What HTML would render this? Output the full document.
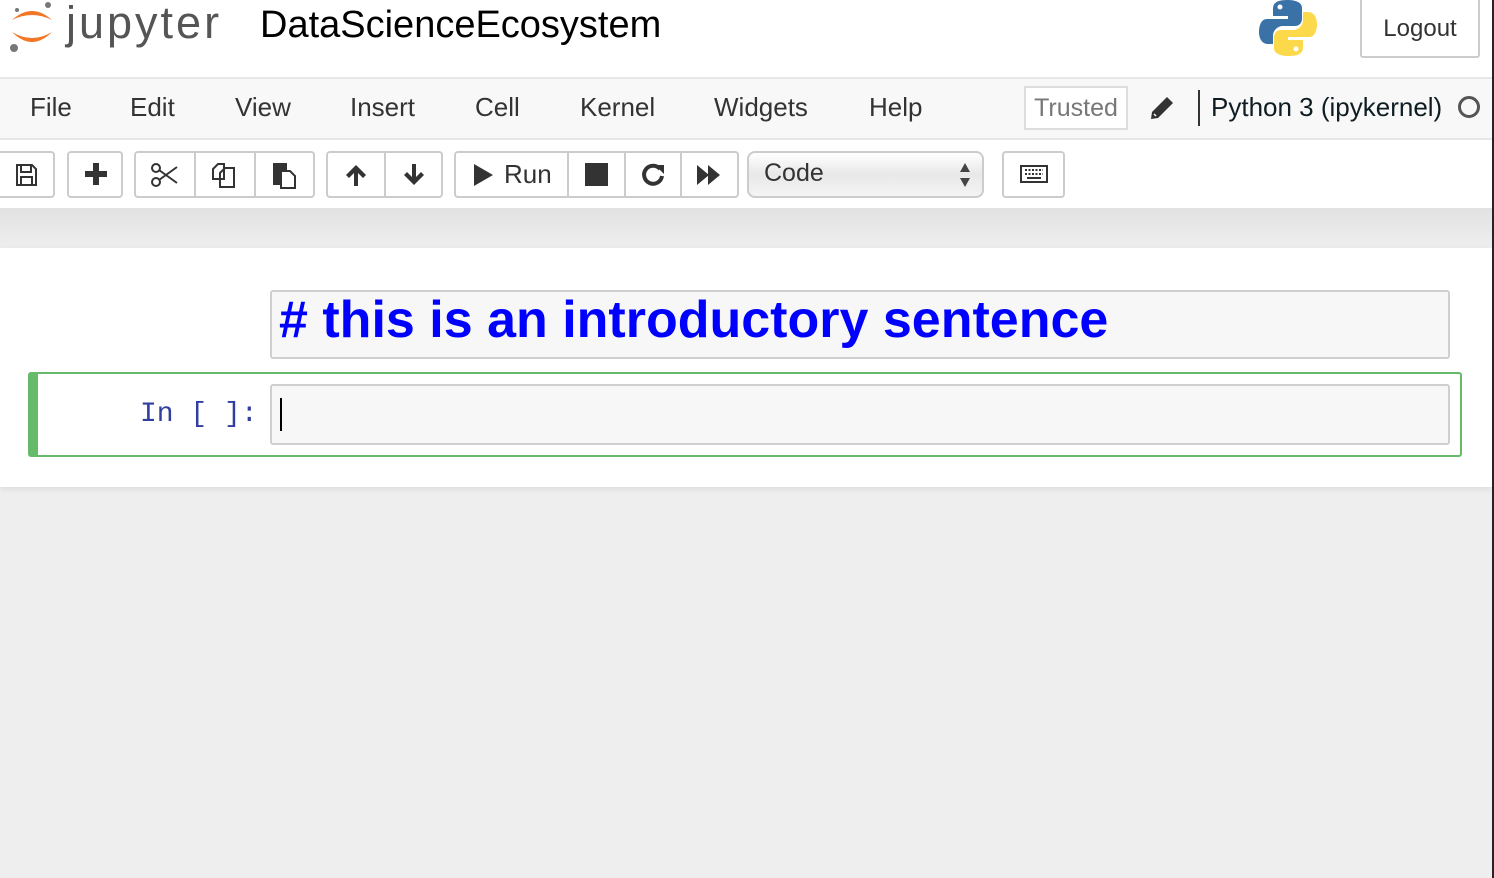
<!DOCTYPE html>
<html><head><style>
*{margin:0;padding:0;box-sizing:border-box}
body{width:1494px;height:878px;background:#eee;font-family:"Liberation Sans",sans-serif;position:relative;overflow:hidden}
.a{position:absolute}
.btn{position:absolute;top:151px;height:47px;border:2px solid #ccc;border-radius:4px;background:#fff}
.sep{position:absolute;top:0;bottom:0;width:2px;background:#ccc}
.menu span{position:absolute;top:92px;font-size:26px;color:#333}
</style></head><body>
<div class="a" style="left:0;top:0;width:1492px;height:77px;background:#fff"></div>
<svg class="a" style="left:8px;top:0" width="48" height="56" viewBox="0 0 48 56">
<path d="M4 20 Q24 2 44 20 Q24 10 4 20Z" fill="#f37726"/>
<path d="M4 32 Q24 52 44 32 Q24 44 4 32Z" fill="#f37726"/>
<circle cx="40" cy="5" r="3" fill="#777"/><circle cx="6" cy="48" r="4" fill="#777"/><circle cx="9" cy="10" r="2" fill="#777"/>
</svg>
<div class="a" style="left:66px;top:-3px;font-size:45px;color:#555;letter-spacing:3px">jupyter</div>
<div class="a" style="left:260px;top:4px;font-size:38px;color:#000">DataScienceEcosystem</div>
<svg class="a" style="left:1259px;top:0" width="58" height="56" viewBox="0 0 58 56">
<path d="M28 0 C14 0 14 6 14 10 V16 H29 V19 H8 C2 19 0 26 0 32 C0 40 4 44 9 44 H14 V36 C14 30 19 26 24 26 H36 C40 26 43 23 43 19 V8 C43 3 38 0 28 0Z" fill="#3a72a8"/>
<path d="M30 56 C44 56 44 50 44 46 V40 H29 V37 H50 C56 37 58 30 58 24 C58 16 54 12 49 12 H44 V20 C44 26 39 30 34 30 H22 C18 30 15 33 15 37 V48 C15 53 20 56 30 56Z" fill="#fcd94a"/>
<circle cx="21" cy="7" r="2.5" fill="#fff"/><circle cx="37" cy="49" r="2.5" fill="#fff"/>
</svg>
<div class="a" style="left:1360px;top:-4px;width:120px;height:62px;border:2px solid #ccc;border-radius:3px;background:#fff;font-size:24px;color:#333;text-align:center;line-height:62px">Logout</div>
<div class="a" style="left:0;top:77px;width:1492px;height:63px;background:#f8f8f8;border-top:2px solid #e7e7e7;border-bottom:2px solid #e7e7e7"></div>
<div class="menu">
<span style="left:30px">File</span><span style="left:130px">Edit</span><span style="left:235px">View</span><span style="left:350px">Insert</span><span style="left:475px">Cell</span><span style="left:580px">Kernel</span><span style="left:714px">Widgets</span><span style="left:869px">Help</span>
</div>
<div class="a" style="left:1024px;top:86px;width:104px;height:44px;border:2px solid #ddd;background:#fff;color:#777;font-size:25px;text-align:center;line-height:40px">Trusted</div>
<svg class="a" style="left:1149px;top:95px" width="26" height="26" viewBox="0 0 26 26"><path d="M18 2 L24 8 L9 23 L2 24 L3 17 Z" fill="#333"/><path d="M5 19 L7 21" stroke="#fff" stroke-width="1.5"/></svg>
<div class="a" style="left:1198px;top:90px;width:2px;height:36px;background:#333"></div>
<div class="a" style="left:1211px;top:92px;font-size:26px;color:#0e1d22">Python 3 (ipykernel)</div>
<div class="a" style="left:1458px;top:96px;width:22px;height:22px;border:3px solid #555;border-radius:50%"></div>
<div class="a" style="left:0;top:140px;width:1492px;height:68px;background:#fff"></div>
<div class="a" style="left:0;top:208px;width:1492px;height:40px;background:linear-gradient(#e2e2e2,#eee)"></div>
<div class="btn" style="left:-4px;width:59px"><svg class="a" style="left:16px;top:10px" width="24" height="24" viewBox="0 0 24 24"><path d="M3 2H18L22 6V22H3Z M7 2V9H17V2 M7 22V14H18V22" fill="none" stroke="#333" stroke-width="2"/></svg></div>
<div class="btn" style="left:67px;width:56px"><div class="a" style="left:16px;top:18px;width:22px;height:6px;background:#333"></div><div class="a" style="left:24px;top:10px;width:6px;height:22px;background:#333"></div></div>
<div class="btn" style="left:134px;width:181px"><div class="sep" style="left:58px"></div><div class="sep" style="left:118px"></div>
<svg class="a" style="left:14px;top:8px" width="30" height="28" viewBox="0 0 30 28"><circle cx="6" cy="7" r="4" fill="none" stroke="#333" stroke-width="2"/><circle cx="6" cy="21" r="4" fill="none" stroke="#333" stroke-width="2"/><path d="M9 9L27 22M9 19L27 6" stroke="#333" stroke-width="2"/></svg>
<svg class="a" style="left:74px;top:8px" width="30" height="28" viewBox="0 0 30 28"><path d="M3 8L8 3H14V18H3Z M10 12L15 7H24V26H10Z" fill="#fff" stroke="#333" stroke-width="2"/></svg>
<svg class="a" style="left:134px;top:8px" width="30" height="28" viewBox="0 0 30 28"><path d="M3 2H17V24H3Z" fill="#333"/><path d="M11 10H20L25 15V27H11Z" fill="#fff" stroke="#333" stroke-width="2"/></svg></div>
<div class="btn" style="left:326px;width:117px"><div class="sep" style="left:56px"></div>
<svg class="a" style="left:16px;top:10px" width="24" height="24" viewBox="0 0 24 24"><path d="M12 2L22 12L19 15L14 10V23H10V10L5 15L2 12Z" fill="#333"/></svg>
<svg class="a" style="left:74px;top:10px" width="24" height="24" viewBox="0 0 24 24"><path d="M12 22L22 12L19 9L14 14V1H10V14L5 9L2 12Z" fill="#333"/></svg></div>
<div class="btn" style="left:454px;width:285px"><div class="sep" style="left:111px"></div><div class="sep" style="left:168px"></div><div class="sep" style="left:224px"></div>
<svg class="a" style="left:16px;top:10px" width="22" height="24" viewBox="0 0 22 24"><path d="M2 1L21 12L2 23Z" fill="#333"/></svg>
<div class="a" style="left:48px;top:6px;font-size:26px;color:#333">Run</div>
<div class="a" style="left:129px;top:10px;width:23px;height:23px;background:#333"></div>
<svg class="a" style="left:184px;top:9px" width="26" height="26" viewBox="0 0 26 26"><path d="M20 7A9 9 0 1 0 22 14" fill="none" stroke="#333" stroke-width="4"/><path d="M15 3H24V12Z" fill="#333"/></svg>
<svg class="a" style="left:240px;top:11px" width="26" height="22" viewBox="0 0 26 22"><path d="M1 1L13 11L1 21Z M12 1L24 11L12 21Z" fill="#333"/></svg></div>
<div class="btn" style="left:747px;width:237px;border-radius:8px;background:linear-gradient(#fff,#e8e8e8 50%,#f4f4f4)"><div class="a" style="left:15px;top:6px;font-size:25px;color:#333">Code</div>
<svg class="a" style="left:210px;top:9px" width="12" height="26" viewBox="0 0 12 26"><path d="M6 1L11 10H1Z M6 25L11 16H1Z" fill="#444"/></svg></div>
<div class="btn" style="left:1002px;width:63px"><svg class="a" style="left:16px;top:12px" width="28" height="18" viewBox="0 0 28 18"><rect x="1" y="1" width="26" height="16" fill="none" stroke="#333" stroke-width="2"/><path d="M5 5H23M5 9H23" stroke="#333" stroke-width="2" stroke-dasharray="2 1.5"/><path d="M7 13H21" stroke="#333" stroke-width="2"/></svg></div>
<div class="a" style="left:0;top:248px;width:1492px;height:239px;background:#fff;box-shadow:0 2px 6px rgba(0,0,0,.08)"></div>
<div class="a" style="left:270px;top:290px;width:1180px;height:69px;background:#f7f7f7;border:2px solid #cfcfcf;border-radius:3px"></div>
<div class="a" style="left:279px;top:290px;font-size:52px;font-weight:bold;color:#0000ff;white-space:nowrap">#&nbsp;this is an introductory sentence</div>
<div class="a" style="left:28px;top:372px;width:1434px;height:85px;border:2px solid #66bb6a;border-left:10px solid #66bb6a;border-radius:3px"></div>
<div class="a" style="left:140px;top:399px;font-family:'Liberation Mono',monospace;font-size:28px;color:#303f9f;white-space:pre">In [ ]:</div>
<div class="a" style="left:270px;top:384px;width:1180px;height:61px;background:#f7f7f7;border:2px solid #cfcfcf;border-radius:3px"></div>
<div class="a" style="left:280px;top:398px;width:2px;height:33px;background:#000"></div>
<div class="a" style="left:1492px;top:0;width:2px;height:878px;background:#2a2228"></div>
</body></html>
